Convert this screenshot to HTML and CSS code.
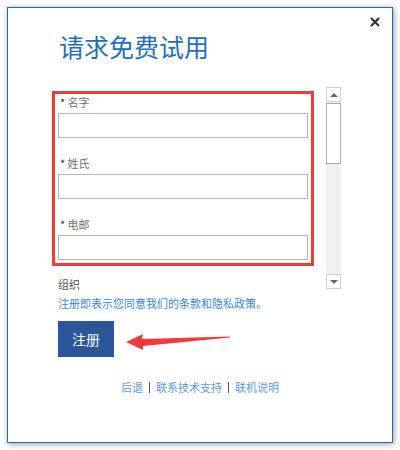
FILE: index.html
```html
<!DOCTYPE html>
<html lang="zh-CN">
<head>
  <meta charset="UTF-8" />
  <title>请求免费试用</title>
  <link rel="stylesheet" href="styles.css">
</head>
<body>
  <div class="dialog">
    <button class="close" aria-label="关闭">
      <svg width="10" height="10" viewBox="0 0 10 10">
        <path d="M1 1 L9 9 M9 1 L1 9" stroke="#333" stroke-width="2.2" />
      </svg>
    </button>

    <h1 class="title">请求免费试用</h1>

    <div class="form-row">
      <div class="fields-col">
        <div class="highlight">
          <div class="field">
            <div class="label"><span class="req">*</span> 名字</div>
            <input class="text-input" />
          </div>
          <div class="field">
            <div class="label"><span class="req">*</span> 姓氏</div>
            <input class="text-input" />
          </div>
          <div class="field">
            <div class="label"><span class="req">*</span> 电邮</div>
            <input class="text-input" />
          </div>
        </div>
        <div class="field plain">
          <div class="label">组织</div>
          <input class="text-input" />
        </div>
      </div>

      <div class="scrollbar">
        <div class="sb-btn"><span class="tri up"></span></div>
        <div class="sb-thumb"></div>
        <div class="sb-track"></div>
        <div class="sb-btn"><span class="tri down"></span></div>
      </div>
    </div>

    <a class="terms" href="#">注册即表示您同意我们的条款和隐私政策。</a>

    <div class="submit-row">
      <button class="submit">注册</button>
      <svg class="arrow" width="108" height="22" viewBox="0 0 108 22">
        <polygon points="2,12 19,4 18,9 106,6.5 106,7.5 19,16 19,20" fill="#f23a3a" />
      </svg>
    </div>

    <div class="footer">
      <a href="#">后退</a>
      <span class="sep"></span>
      <a href="#">联系技术支持</a>
      <span class="sep"></span>
      <a href="#">联机说明</a>
    </div>
  </div>
</body>
</html>
```

FILE: styles.css
```css
body {
  margin: 0;
  background: #fff;
  font-family: "Noto Sans CJK SC", "Noto Sans", sans-serif;
}

.dialog {
  position: relative;
  box-sizing: border-box;
  width: 386px;
  height: 436px;
  margin: 7px;
  padding: 23px 0 0 44px;
  border: 1px solid #1a6bbd;
  background: #fff;
  box-shadow: 1px 1px 6px rgba(0, 0, 0, 0.4);
}

.close {
  position: absolute;
  top: 7px;
  right: 10px;
  width: 14px;
  height: 14px;
  padding: 2px;
  border: none;
  background: none;
  cursor: pointer;
}

.close svg {
  display: block;
}

.title {
  margin: 0 0 0 7px;
  font-size: 25px;
  line-height: 30px;
  font-weight: normal;
  color: #1f70b5;
}

.form-row {
  display: flex;
  align-items: flex-start;
  gap: 12px;
  height: 208px;
  margin-top: 26px;
}

.fields-col {
  box-sizing: border-box;
  width: 262px;
  height: 208px;
  padding-top: 4px;
  overflow: hidden;
}

.highlight {
  padding: 0 3px 3px;
  border: 3px solid #f23a3a;
}

.field + .field {
  margin-top: 17px;
}

.field.plain {
  margin-top: 10px;
  padding-left: 6px;
}

.label {
  height: 19px;
  padding-left: 2px;
  font-size: 11px;
  line-height: 16px;
  color: #707070;
}

.plain .label {
  padding-left: 0;
  color: #555;
}

.req {
  color: #333;
}

.text-input {
  display: block;
  box-sizing: border-box;
  width: 250px;
  height: 25px;
  margin: 0;
  border: 1px solid #b6b6b6;
  background: #fff;
}

.scrollbar {
  display: flex;
  flex-direction: column;
  width: 15px;
  height: 202px;
  background: #f0f0f0;
}

.sb-btn {
  box-sizing: border-box;
  height: 15px;
  border: 1px solid #cfcfcf;
  background: #fff;
  display: flex;
  align-items: center;
  justify-content: center;
}

.sb-thumb {
  box-sizing: border-box;
  height: 61px;
  margin-top: 1px;
  border: 1px solid #ababab;
  background: #fff;
}

.sb-track {
  flex: 1;
}

.tri {
  width: 0;
  height: 0;
  border-left: 4px solid transparent;
  border-right: 4px solid transparent;
}

.tri.up {
  border-bottom: 4px solid #666;
}

.tri.down {
  border-top: 4px solid #666;
}

.terms {
  display: block;
  margin: 0 0 0 6px;
  font-size: 11px;
  line-height: 16px;
  color: #3c84d6;
  text-decoration: none;
}

.submit-row {
  display: flex;
  align-items: center;
  margin: 10px 0 0 6px;
}

.submit {
  width: 56px;
  height: 36px;
  border: none;
  background: #2b579a;
  color: #fff;
  font-family: inherit;
  font-size: 14px;
  cursor: pointer;
}

.arrow {
  display: block;
  margin: 4px 0 0 10px;
}

.footer {
  display: flex;
  align-items: center;
  justify-content: center;
  gap: 6px;
  margin: 22px 0 0 -44px;
  font-size: 11px;
  line-height: 16px;
}

.footer a {
  color: #5b9ae0;
  text-decoration: none;
}

.sep {
  width: 1px;
  height: 11px;
  background: #555;
}
```
